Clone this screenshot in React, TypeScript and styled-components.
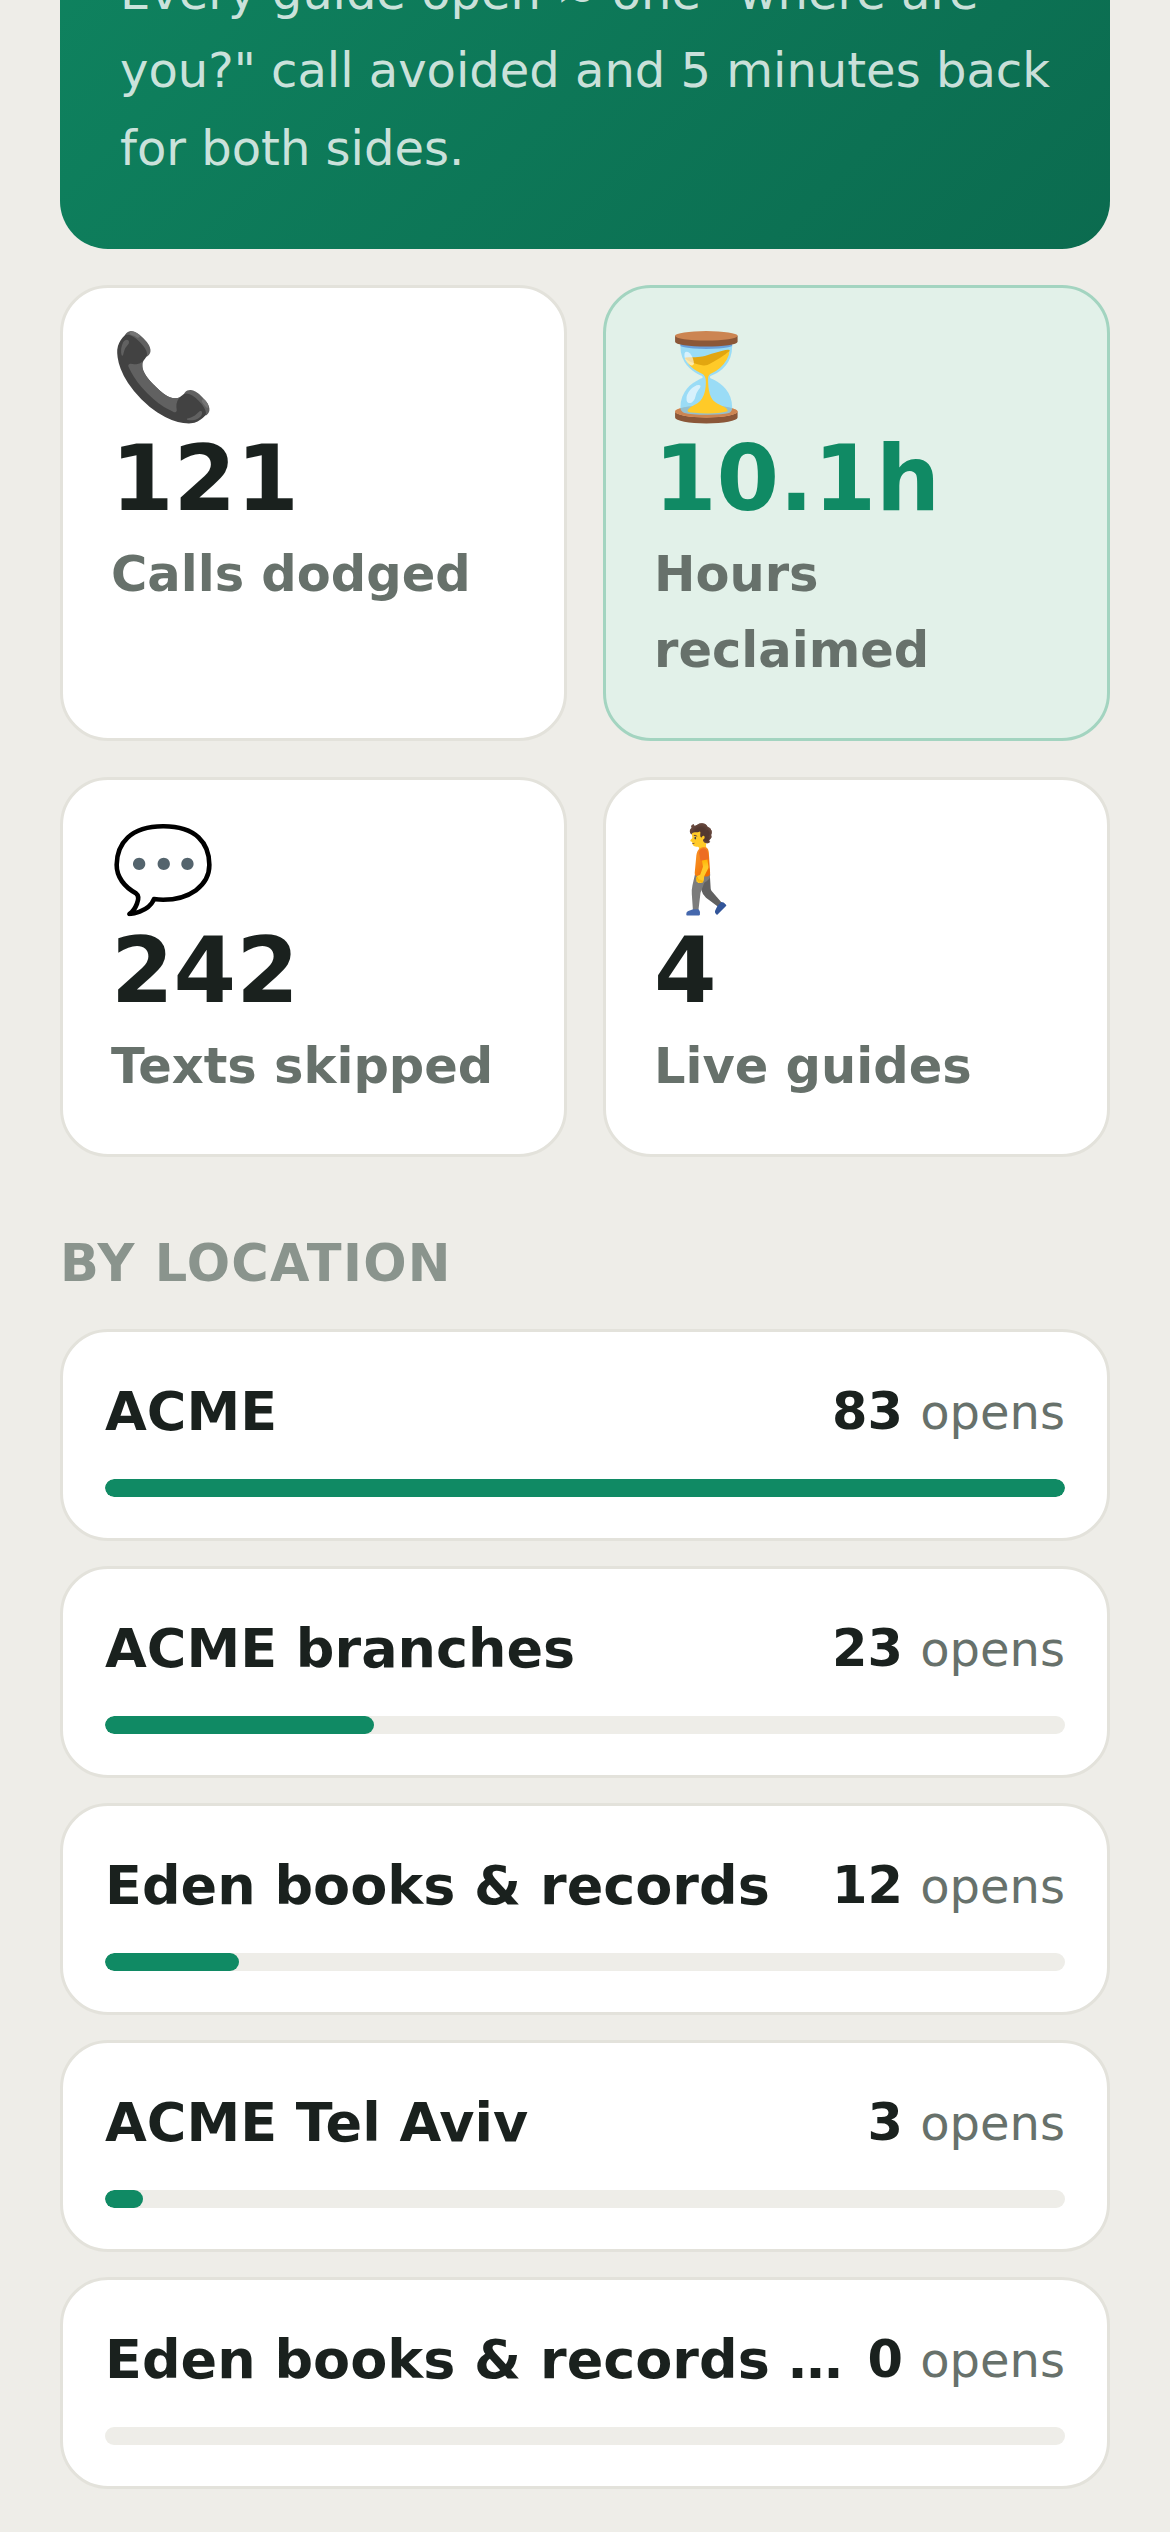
import React from "react";
import styled, { createGlobalStyle } from "styled-components";

const Global = createGlobalStyle`
  html, body { margin: 0; padding: 0; background: #eeede8; }
  body { font-family: "DejaVu Sans", "Noto Color Emoji", sans-serif; }
`;

const Page = styled.main`
  width: 1170px;
  height: 2532px;
  overflow: hidden;
  box-sizing: border-box;
  padding: 0 60px;
  background: #eeede8;
  display: flex;
  flex-direction: column;
`;

const Hero = styled.section`
  margin-top: -507px;
  padding: 460px 60px 62px;
  border-radius: 0 0 48px 48px;
  background: linear-gradient(135deg, #108a64, #0b6b4f);
`;

const HeroText = styled.p`
  margin: 0;
  font-size: 48px;
  line-height: 78px;
  color: rgba(255, 255, 255, 0.8);
`;

const Stats = styled.section`
  margin-top: 36px;
  display: grid;
  grid-template-columns: 1fr 1fr;
  gap: 36px;
`;

const StatCard = styled.div<{ $accent?: boolean }>`
  box-sizing: border-box;
  border-radius: 48px;
  padding: 41px 48px 50px;
  border: 3px solid ${(p) => (p.$accent ? "#a3d4c0" : "#e3e2db")};
  background: ${(p) => (p.$accent ? "#e2f1e9" : "#ffffff")};
`;

const StatIcon = styled.div`
  font-size: 84px;
  line-height: 96px;
`;

const StatValue = styled.div<{ $accent?: boolean }>`
  margin-top: 9px;
  font-size: 90px;
  line-height: 90px;
  font-weight: 700;
  color: ${(p) => (p.$accent ? "#108a64" : "#1a211e")};
`;

const StatLabel = styled.div`
  margin-top: 12px;
  font-size: 49.5px;
  line-height: 76px;
  font-weight: 700;
  color: #67716b;
`;

const SectionTitle = styled.h2`
  margin: 77px 0 35px;
  font-size: 51px;
  line-height: 60px;
  font-weight: 700;
  letter-spacing: 1.3px;
  color: #8a948d;
`;

const Rows = styled.section`
  display: flex;
  flex-direction: column;
  gap: 25.5px;
`;

const Row = styled.article`
  box-sizing: border-box;
  height: 211.5px;
  padding: 42px 42px 40px;
  border-radius: 48px;
  border: 3px solid #e3e2db;
  background: #ffffff;
`;

const RowHead = styled.div`
  display: flex;
  align-items: center;
  justify-content: space-between;
  gap: 22px;
  height: 75px;
`;

const RowName = styled.div`
  flex: 1;
  min-width: 0;
  overflow: hidden;
  white-space: nowrap;
  text-overflow: ellipsis;
  font-size: 54px;
  font-weight: 700;
  color: #1a211e;
`;

const RowCount = styled.div`
  flex-shrink: 0;
  font-size: 48px;
  color: #67716b;
`;

const RowNumber = styled.b`
  margin-right: 2px;
  font-size: 51px;
  color: #1a211e;
`;

const Track = styled.div`
  margin-top: 30px;
  height: 18px;
  border-radius: 9px;
  background: #eeede8;
  overflow: hidden;
`;

const Fill = styled.div`
  height: 100%;
  border-radius: 9px;
  background: #108a64;
`;

const stats = [
  { icon: "📞", value: "121", label: "Calls dodged" },
  { icon: "⏳", value: "10.1h", label: "Hours reclaimed", accent: true },
  { icon: "💬", value: "242", label: "Texts skipped" },
  { icon: "🚶", value: "4", label: "Live guides" },
];

const rows = [
  { name: "ACME", count: 83 },
  { name: "ACME branches", count: 23 },
  { name: "Eden books & records", count: 12 },
  { name: "ACME Tel Aviv", count: 3 },
  { name: "Eden books & records Jaffa", count: 0 },
];

export default function App() {
  return (
    <Page>
      <Global />
      <Hero>
        <HeroText>
          Every guide open ≈ one "where are you?" call avoided and 5 minutes back for both sides.
        </HeroText>
      </Hero>
      <Stats>
        {stats.map((s) => (
          <StatCard key={s.label} $accent={s.accent}>
            <StatIcon>{s.icon}</StatIcon>
            <StatValue $accent={s.accent}>{s.value}</StatValue>
            <StatLabel>{s.label}</StatLabel>
          </StatCard>
        ))}
      </Stats>
      <SectionTitle>BY LOCATION</SectionTitle>
      <Rows>
        {rows.map((r) => (
          <Row key={r.name}>
            <RowHead>
              <RowName>{r.name}</RowName>
              <RowCount>
                <RowNumber>{r.count}</RowNumber> opens
              </RowCount>
            </RowHead>
            <Track>
              <Fill style={{ width: `${Math.round((r.count / 83) * 100)}%` }} />
            </Track>
          </Row>
        ))}
      </Rows>
    </Page>
  );
}
